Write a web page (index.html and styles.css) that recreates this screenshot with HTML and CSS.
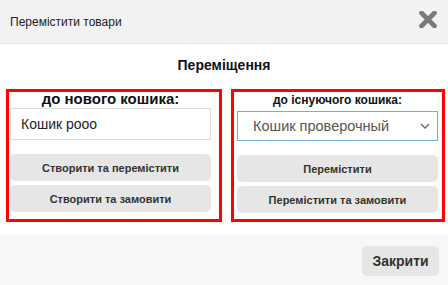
FILE: index.html
```html
<!DOCTYPE html>
<html lang="uk">
<head>
    <meta charset="UTF-8">
    <meta name="viewport" content="width=device-width, initial-scale=1.0">
    <title>Перемістити товари</title>
    <link rel="stylesheet" href="styles.css">
</head>
<body>

    <div class="modal">
        <div class="modal-header">
            <span class="modal-title">Перемістити товари</span>
            <button class="close-x" type="button" aria-label="Закрити">
                <svg width="18" height="17" viewBox="0 0 18 17">
                    <path d="M2.5 2 L15.5 15 M15.5 2 L2.5 15" stroke="#7a7a7a" stroke-width="4.6" stroke-linecap="round"/>
                </svg>
            </button>
        </div>

        <div class="modal-body">
            <h3 class="section-title">Переміщення</h3>

            <div class="move-columns">
                <div class="move-box box-new">
                    <div class="box-title title-new">до нового кошика:</div>
                    <input type="text" class="cart-name" value="Кошик рооо">
                    <div class="box-actions">
                        <button type="button" class="action-btn">Створити та перемістити</button>
                        <button type="button" class="action-btn">Створити та замовити</button>
                    </div>
                </div>

                <div class="move-box box-existing">
                    <div class="box-title title-existing">до існуючого кошика:</div>
                    <div class="cart-select">
                        <select>
                            <option>Кошик проверочный</option>
                        </select>
                        <svg class="chevron" width="10" height="6" viewBox="0 0 10 6">
                            <path d="M1 1 L5 5 L9 1" fill="none" stroke="#666" stroke-width="1.3"/>
                        </svg>
                    </div>
                    <div class="box-actions">
                        <button type="button" class="action-btn">Перемістити</button>
                        <button type="button" class="action-btn">Перемістити та замовити</button>
                    </div>
                </div>
            </div>
        </div>

        <div class="modal-footer">
            <button type="button" class="footer-btn">Закрити</button>
        </div>
    </div>

</body>
</html>
```

FILE: styles.css
```css
body {
    margin: 0;
    background: #fff;
    font-family: "Liberation Sans", Arial, sans-serif;
    color: #222;
}

.modal {
    width: 448px;
    height: 285px;
    display: flex;
    flex-direction: column;
}

.modal-header {
    height: 43px;
    background: #f2f2f2;
    border-bottom: 1px solid #e8e8e8;
    display: flex;
    align-items: center;
    justify-content: space-between;
    padding: 0 10px;
}

.modal-title {
    font-size: 12px;
    color: #222;
}

.close-x {
    border: none;
    background: none;
    padding: 0;
    margin-right: 1px;
    margin-top: -4px;
    display: flex;
    cursor: pointer;
}

.modal-body {
    flex: 1;
}

.section-title {
    margin: 0;
    height: 45px;
    line-height: 42px;
    text-align: center;
    font-size: 14px;
    font-weight: bold;
    color: #111;
}

.move-columns {
    display: grid;
    grid-template-columns: 216px 214px;
    gap: 9px;
    padding: 0 3px 0 6px;
}

.move-box {
    border: 3px solid #ff0000;
    height: 127px;
}

.box-new {
    padding: 0 8px 0 1px;
}

.box-existing {
    padding: 0 4px 0 3px;
}

.box-title {
    font-weight: bold;
    text-align: center;
    color: #111;
}

.title-new {
    font-size: 15px;
    height: 16px;
    line-height: 14px;
}

.title-existing {
    font-size: 12px;
    height: 19px;
    line-height: 16px;
}

.cart-name {
    display: block;
    width: 100%;
    height: 32px;
    box-sizing: border-box;
    border: 1px solid #dcdcdc;
    padding: 0 10px;
    font-family: inherit;
    font-size: 14px;
    color: #222;
    outline: none;
}

.cart-select {
    height: 30px;
    box-sizing: border-box;
    border: 1px solid #6eaee0;
    display: flex;
    align-items: center;
    padding: 0 7px 0 15px;
}

.cart-select select {
    flex: 1;
    appearance: none;
    border: none;
    background: none;
    padding: 0;
    font-family: inherit;
    font-size: 14.5px;
    color: #555;
    outline: none;
}

.box-actions {
    display: flex;
    flex-direction: column;
    gap: 4px;
    margin-top: 14px;
}

.action-btn {
    height: 27px;
    border: none;
    border-radius: 5px;
    background: #e6e6e6;
    font-family: inherit;
    font-size: 11px;
    font-weight: bold;
    color: #333;
    cursor: pointer;
}

.modal-footer {
    height: 50px;
    background: #f7f7f7;
    display: flex;
    justify-content: flex-end;
    align-items: flex-start;
    padding: 11px 9px 0 0;
    box-sizing: border-box;
}

.footer-btn {
    height: 30px;
    width: 77px;
    border: none;
    border-radius: 5px;
    background: #e6e6e6;
    font-family: inherit;
    font-size: 14px;
    font-weight: bold;
    color: #333;
    cursor: pointer;
}
```
